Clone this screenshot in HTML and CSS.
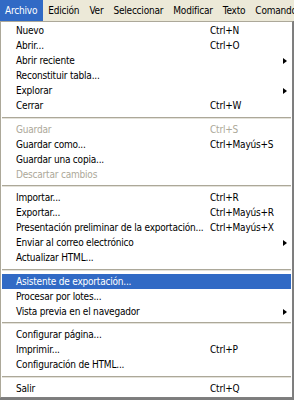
FILE: index.html
```html
<!DOCTYPE html>
<html>

<head>
    <title>Archivo</title>
    <link rel="stylesheet" href="styles.css">
</head>

<body>
    <div class="menubar">
        <span class="menubar-item active">Archivo</span>
        <span class="menubar-item">Edición</span>
        <span class="menubar-item">Ver</span>
        <span class="menubar-item">Seleccionar</span>
        <span class="menubar-item">Modificar</span>
        <span class="menubar-item">Texto</span>
        <span class="menubar-item">Comandos</span>
    </div>

    <ul class="menu">
        <li class="item"><span class="label">Nuevo</span><span class="key">Ctrl+N</span></li>
        <li class="item"><span class="label">Abrir...</span><span class="key">Ctrl+O</span></li>
        <li class="item"><span class="label">Abrir reciente</span><span class="key"></span><span class="arrow"></span></li>
        <li class="item"><span class="label">Reconstituir tabla...</span></li>
        <li class="item"><span class="label">Explorar</span><span class="key"></span><span class="arrow"></span></li>
        <li class="item"><span class="label">Cerrar</span><span class="key">Ctrl+W</span></li>
        <li class="sep"></li>
        <li class="item disabled"><span class="label">Guardar</span><span class="key">Ctrl+S</span></li>
        <li class="item"><span class="label">Guardar como...</span><span class="key">Ctrl+Mayús+S</span></li>
        <li class="item"><span class="label">Guardar una copia...</span></li>
        <li class="item disabled"><span class="label">Descartar cambios</span></li>
        <li class="sep short"></li>
        <li class="item"><span class="label">Importar...</span><span class="key">Ctrl+R</span></li>
        <li class="item"><span class="label">Exportar...</span><span class="key">Ctrl+Mayús+R</span></li>
        <li class="item"><span class="label">Presentación preliminar de la exportación...</span><span class="key">Ctrl+Mayús+X</span></li>
        <li class="item"><span class="label">Enviar al correo electrónico</span><span class="key"></span><span class="arrow"></span></li>
        <li class="item"><span class="label">Actualizar HTML...</span></li>
        <li class="sep"></li>
        <li class="item selected"><span class="label">Asistente de exportación...</span></li>
        <li class="item"><span class="label">Procesar por lotes...</span></li>
        <li class="item"><span class="label">Vista previa en el navegador</span><span class="key"></span><span class="arrow"></span></li>
        <li class="sep short"></li>
        <li class="item"><span class="label">Configurar página...</span></li>
        <li class="item"><span class="label">Imprimir...</span><span class="key">Ctrl+P</span></li>
        <li class="item"><span class="label">Configuración de HTML...</span></li>
        <li class="sep"></li>
        <li class="item"><span class="label">Salir</span><span class="key">Ctrl+Q</span></li>
    </ul>
</body>

</html>
```

FILE: styles.css
```css
body {
    margin: 0;
    height: 400px;
    overflow: hidden;
    background-color: #7d7d7d;
    font-family: "DejaVu Sans Condensed", "DejaVu Sans", sans-serif;
    font-size: 10px;
    letter-spacing: -0.2px;
    color: #000;
}

.menubar {
    display: flex;
    height: 21px;
    overflow: hidden;
    background-color: #ece9d8;
}

.menubar-item {
    padding: 1px 5px 0 5px;
    line-height: 20px;
    white-space: nowrap;
}

.menubar-item.active {
    padding-right: 6px;
    background-color: #316ac5;
    color: white;
}

.menu {
    list-style: none;
    margin: 0;
    width: 293px;
    box-sizing: border-box;
    padding: 1px;
    background-color: white;
    border: 1px solid #aca899;
    border-right-color: #808080;
    border-bottom-color: #808080;
}

.item {
    display: grid;
    grid-template-columns: 194px 1fr 8px;
    align-items: center;
    height: 15px;
    padding-left: 14px;
    white-space: nowrap;
}

.item.disabled {
    color: #aca899;
}

.item.selected {
    background-color: #316ac5;
    color: white;
}

.arrow {
    width: 0;
    height: 0;
    border-top: 3.5px solid transparent;
    border-bottom: 3.5px solid transparent;
    border-left: 4px solid #000;
}

.sep {
    height: 9px;
    display: flex;
    flex-direction: column;
    justify-content: center;
}

.sep.short {
    height: 8px;
}

.sep::before {
    content: "";
    height: 1px;
    background-color: #aca899;
    border-bottom: 1px solid #e4e2da;
}
```
